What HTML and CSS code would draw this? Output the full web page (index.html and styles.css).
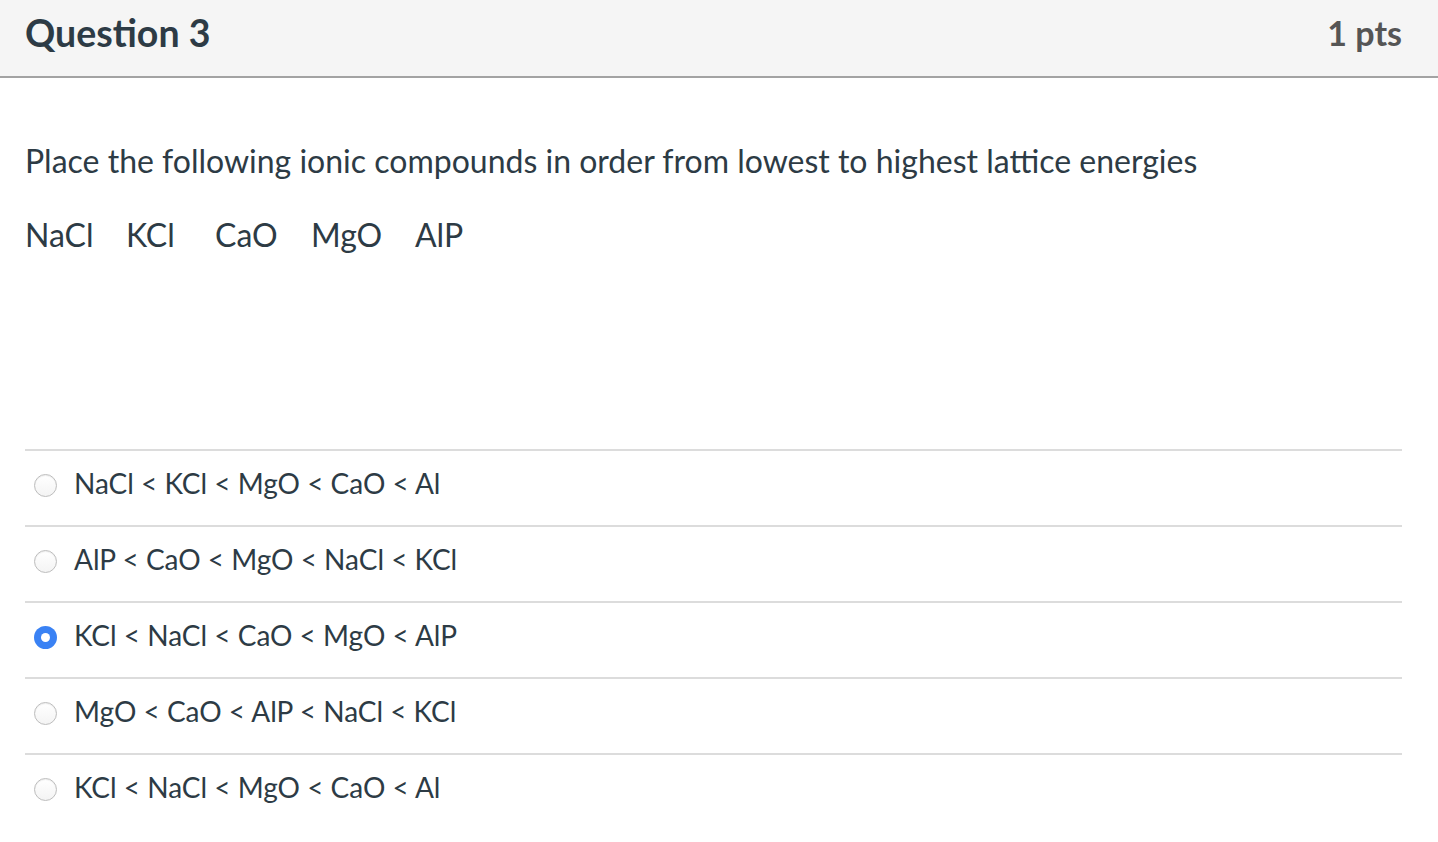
FILE: index.html
```html
<!DOCTYPE html>
<html lang="en">
<head>
<meta charset="utf-8">
<title>Question 3</title>
<link rel="stylesheet" href="styles.css">
</head>
<body>
<div class="question">
  <div class="question-header">
    <h2 class="question-title">Question 3</h2>
    <div class="question-points">1 pts</div>
  </div>
  <div class="question-body">
    <p class="question-text">Place the following ionic compounds in order from lowest to highest lattice energies</p>
    <p class="question-text compounds"><span class="c1">NaCl</span><span class="c2">KCl</span><span class="c3">CaO</span><span class="c4">MgO</span><span class="c5">AlP</span></p>
    <div class="answers">
      <label class="answer">
        <span class="radio"></span>
        <span class="answer-text">NaCl &lt; KCl &lt; MgO &lt; CaO &lt; Al</span>
      </label>
      <label class="answer">
        <span class="radio"></span>
        <span class="answer-text">AlP &lt; CaO &lt; MgO &lt; NaCl &lt; KCl</span>
      </label>
      <label class="answer">
        <span class="radio checked"></span>
        <span class="answer-text">KCl &lt; NaCl &lt; CaO &lt; MgO &lt; AlP</span>
      </label>
      <label class="answer">
        <span class="radio"></span>
        <span class="answer-text">MgO &lt; CaO &lt; AlP &lt; NaCl &lt; KCl</span>
      </label>
      <label class="answer">
        <span class="radio"></span>
        <span class="answer-text">KCl &lt; NaCl &lt; MgO &lt; CaO &lt; Al</span>
      </label>
    </div>
  </div>
</div>
</body>
</html>
```

FILE: styles.css
```css
html, body {
  margin: 0;
  padding: 0;
  background: #ffffff;
}

body {
  font-family: Lato, "Open Sans", "Liberation Sans", sans-serif;
  color: #2d3b45;
}

.question-header {
  display: flex;
  justify-content: space-between;
  align-items: flex-start;
  height: 78px;
  box-sizing: border-box;
  padding: 11px 36px 0 25px;
  background: #f5f5f5;
  border-bottom: 2px solid #a3a3a3;
}

.question-title {
  margin: 0;
  font-size: 37.5px;
  line-height: 44px;
  font-weight: 700;
  color: #2d3b45;
}

.question-points {
  font-size: 34px;
  line-height: 44px;
  font-weight: 700;
  color: #555555;
}

.question-body {
  padding: 59px 36px 0 25px;
}

.question-text {
  margin: 0 0 26px 0;
  font-size: 32px;
  line-height: 48px;
}

.compounds {
  display: flex;
  margin-bottom: 190px;
}

.compounds .c1 { width: 101px; }
.compounds .c2 { width: 89px; }
.compounds .c3 { width: 96px; }
.compounds .c4 { width: 104px; }

.answers {
  display: flex;
  flex-direction: column;
}

.answer {
  display: flex;
  align-items: flex-start;
  height: 76px;
  box-sizing: border-box;
  border-top: 2px solid #dcdcdc;
  padding-top: 15px;
}

.radio {
  flex: none;
  width: 23px;
  height: 23px;
  box-sizing: border-box;
  margin: 8px 17px 0 9px;
  border-radius: 50%;
  border: 1px solid #bdbdbd;
  background: linear-gradient(#ffffff, #f4f4f4);
  box-shadow: inset 0 1px 1px rgba(0, 0, 0, 0.07);
  position: relative;
}

.radio.checked {
  border: none;
  background: #3a82f4;
  box-shadow: none;
}

.radio.checked::after {
  content: "";
  position: absolute;
  left: 50%;
  top: 50%;
  width: 9px;
  height: 9px;
  margin: -4.5px 0 0 -4.5px;
  border-radius: 50%;
  background: #ffffff;
}

.answer-text {
  font-size: 28px;
  line-height: 34px;
}
```
